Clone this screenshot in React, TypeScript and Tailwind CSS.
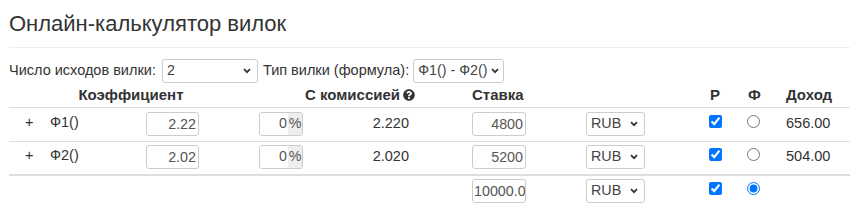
import { FaQuestionCircle } from "react-icons/fa";

function Chevron() {
  return (
    <svg width="8" height="6" viewBox="0 0 8 6" className="shrink-0">
      <path d="M1 1.2l3 3 3-3" fill="none" stroke="#333" strokeWidth="1.7" />
    </svg>
  );
}

function FakeSelect({ value, w, pr = "pr-[6px]" }: { value: string; w: string; pr?: string }) {
  return (
    <div
      className={`${w} ${pr} h-[24px] flex items-center justify-between pl-[4px] border border-[#ccc] rounded-[3px] bg-white text-[14.3px] text-[#444]`}
    >
      <span className="whitespace-nowrap">{value}</span>
      <Chevron />
    </div>
  );
}

function NumInput({ value, w, left = false }: { value: string; w: string; left?: boolean }) {
  return (
    <input
      readOnly
      value={value}
      className={`${w} h-[24px] border border-[#ccc] rounded-[3px] bg-white text-[14.3px] text-[#555] outline-none ${
        left ? "text-left pl-[1px]" : "text-right px-[2px]"
      }`}
    />
  );
}

function Percent() {
  return (
    <div className="flex h-[24px] w-[44px] border border-[#ccc] rounded-[3px] overflow-hidden text-[14.3px]">
      <input readOnly value="0" className="w-[28px] pr-[1px] text-right text-[#555] bg-white outline-none" />
      <span className="flex-1 bg-[#eee] text-[#555] flex items-center justify-center">%</span>
    </div>
  );
}

type Row = { name: string; coef: string; net: string; stake: string; income: string };

const rows: Row[] = [
  { name: "Ф1()", coef: "2.22", net: "2.220", stake: "4800", income: "656.00" },
  { name: "Ф2()", coef: "2.02", net: "2.020", stake: "5200", income: "504.00" },
];

function BetRow({ row, first }: { row: Row; first: boolean }) {
  return (
    <div
      className={`flex items-start h-[34px] border-[#ddd] ${
        first ? "pt-[4px] border-b" : "pt-[3px] border-b-2"
      }`}
    >
      <div className="w-[35px] pl-[16px] leading-[20px]">+</div>
      <div className="w-[96px] pl-[6px] leading-[20px]">{row.name}</div>
      <div className="w-[113px] pl-[6px]">
        <NumInput value={row.coef} w="w-[53px]" />
      </div>
      <div className="w-[67px] pl-[6px]">
        <Percent />
      </div>
      <div className="w-[147px] pr-[58px] text-right leading-[20px] pt-[1px]">{row.net}</div>
      <div className="w-[114px] pl-[5px]">
        <NumInput value={row.stake} w="w-[54px]" />
      </div>
      <div className="w-[124px] pl-[5px]">
        <FakeSelect value="RUB" w="w-[59px]" />
      </div>
      <div className="w-[38px] pl-[4px] pt-[1px]">
        <input type="checkbox" defaultChecked className="w-[13px] h-[13px] m-0" />
      </div>
      <div className="w-[38px] pl-[4px] pt-[1px]">
        <input type="radio" name="fix" className="w-[13px] h-[13px] m-0" />
      </div>
      <div className="pl-[5px] leading-[20px] pt-[1px]">{row.income}</div>
    </div>
  );
}

export default function App() {
  return (
    <div
      className="w-[850px] h-[219px] overflow-hidden bg-white pl-[9px] text-[14.5px] text-[#333]"
      style={{ fontFamily: '"Liberation Sans", Arial, sans-serif' }}
    >
      <h1 className="mt-[10px] pb-[9px] text-[22px] leading-[28px] font-normal border-b border-[#eee]">
        Онлайн-калькулятор вилок
      </h1>

      <div className="mt-[11px] flex items-center h-[24px] whitespace-nowrap">
        <span>Число исходов вилки:</span>
        <div className="ml-[6px]">
          <FakeSelect value="2" w="w-[96px]" />
        </div>
        <span className="ml-[5px]">Тип вилки (формула):</span>
        <div className="ml-[4px]">
          <FakeSelect value="Ф1() - Ф2()" w="w-[91px]" pr="pr-[4px]" />
        </div>
      </div>

      <div className="flex items-center h-[25px] border-b border-[#ddd] font-bold text-[15px] whitespace-nowrap">
        <div className="w-[244px] text-center">Коэффициент</div>
        <div className="w-[214px] flex items-center justify-center gap-[3px]">
          С комиссией
          <FaQuestionCircle className="w-[12px] h-[12px] text-[#333]" />
        </div>
        <div className="w-[238px] pl-[5px]">Ставка</div>
        <div className="w-[38px] pl-[5px]">Р</div>
        <div className="w-[38px] pl-[5px]">Ф</div>
        <div className="pl-[5px]">Доход</div>
      </div>

      {rows.map((r, i) => (
        <BetRow key={r.name} row={r} first={i === 0} />
      ))}

      <div className="flex items-start pt-[3px]">
        <div className="w-[458px]" />
        <div className="w-[114px] pl-[5px]">
          <NumInput value="10000.00" w="w-[54px]" left />
        </div>
        <div className="w-[124px] pl-[5px]">
          <FakeSelect value="RUB" w="w-[59px]" />
        </div>
        <div className="w-[38px] pl-[4px] pt-[1px]">
          <input type="checkbox" defaultChecked className="w-[13px] h-[13px] m-0" />
        </div>
        <div className="w-[38px] pl-[4px] pt-[1px]">
          <input type="radio" name="fix" defaultChecked className="w-[13px] h-[13px] m-0" />
        </div>
      </div>
    </div>
  );
}
